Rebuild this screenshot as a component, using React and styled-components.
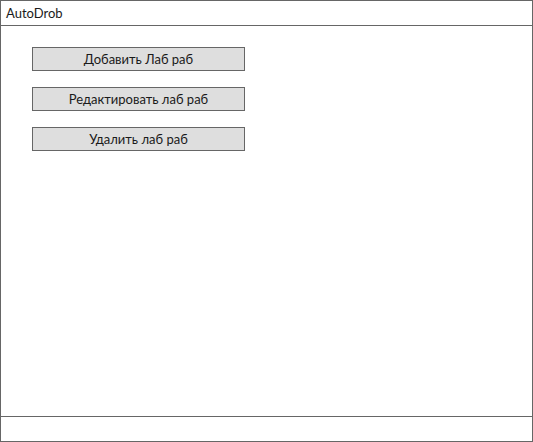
import styled, { createGlobalStyle } from "styled-components";

const GlobalStyle = createGlobalStyle`
  html, body {
    margin: 0;
    padding: 0;
    background: #fff;
  }
  body {
    font-family: Lato, "Open Sans", "DejaVu Sans", sans-serif;
  }
`;

const actions = ["Добавить Лаб раб", "Редактировать лаб раб", "Удалить лаб раб"];

function App() {
  return (
    <>
      <GlobalStyle />
      <Frame>
        <Header>AutoDrob</Header>
        <Main>
          {actions.map((label) => (
            <ActionButton key={label}>{label}</ActionButton>
          ))}
        </Main>
        <Footer />
      </Frame>
    </>
  );
}

const Frame = styled.div`
  width: 533px;
  height: 442px;
  box-sizing: border-box;
  border: 1px solid #666;
  display: flex;
  flex-direction: column;
`;
const Header = styled.div`
  height: 24px;
  border-bottom: 1px solid #666;
  display: flex;
  align-items: center;
  padding-left: 5px;
  font-size: 13px;
  color: #1a1a1a;
`;
const Main = styled.div`
  flex: 1;
  display: flex;
  flex-direction: column;
  align-items: flex-start;
  gap: 16px;
  padding: 21px 0 0 31px;
`;
const ActionButton = styled.button`
  width: 213px;
  height: 24px;
  box-sizing: border-box;
  border: 1px solid #666;
  border-radius: 0;
  background: #dedede;
  font-family: inherit;
  font-size: 13px;
  color: #1a1a1a;
  padding: 0;
  cursor: pointer;
`;
const Footer = styled.div`
  height: 24px;
  border-top: 1px solid #666;
`;

export default App;
